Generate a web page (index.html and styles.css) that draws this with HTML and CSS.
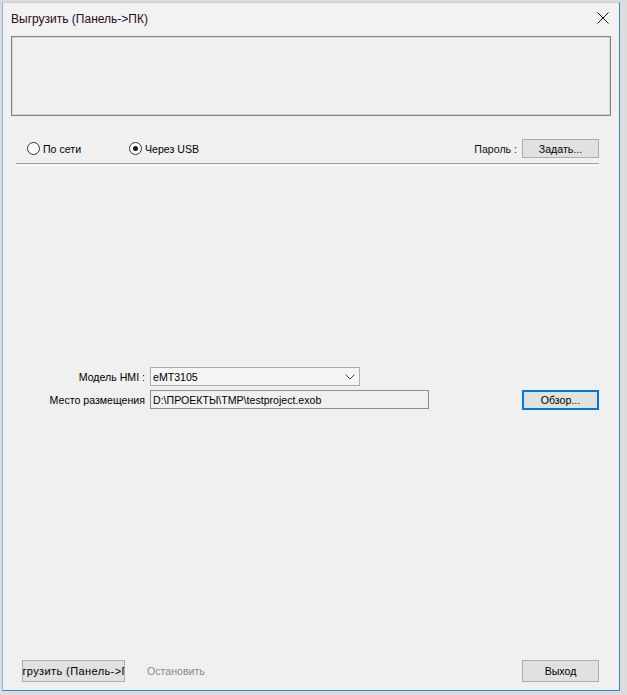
FILE: index.html
```html
<!DOCTYPE html>
<html lang="ru">
<head>
<meta charset="utf-8">
<title>Выгрузить (Панель->ПК)</title>
<link rel="stylesheet" href="styles.css">
</head>
<body>
<div class="window">
  <div class="titlebar">
    <span class="title">Выгрузить (Панель-&gt;ПК)</span>
    <span class="close">
      <svg width="12" height="12" viewBox="0 0 12 12"><path d="M0.5 0.5 L11.5 11.5 M11.5 0.5 L0.5 11.5" stroke="#111" stroke-width="1" fill="none"/></svg>
    </span>
  </div>
  <div class="logbox"></div>
  <div class="moderow">
    <label class="radio"><span class="circle"></span>По сети</label>
    <label class="radio"><span class="circle checked"></span>Через USB</label>
    <span class="pwdlabel">Пароль :</span>
    <span class="btn btn-set">Задать...</span>
  </div>
  <div class="separator"></div>
  <div class="form">
    <div class="formrow">
      <span class="flabel">Модель HMI :</span>
      <div class="select"><span>eMT3105</span>
        <svg class="chev" width="10" height="6" viewBox="0 0 10 6"><path d="M0.5 0.5 L5 5 L9.5 0.5" stroke="#444" stroke-width="1" fill="none"/></svg>
      </div>
    </div>
    <div class="formrow">
      <span class="flabel">Место размещения</span>
      <div class="input">D:\ПРОЕКТЫ\TMP\testproject.exob</div>
      <span class="btn btn-browse">Обзор...</span>
    </div>
  </div>
  <div class="bottomrow">
    <span class="btn btn-upload"><span>Выгрузить (Панель-&gt;ПК)</span></span>
    <span class="stop">Остановить</span>
    <span class="btn btn-exit">Выход</span>
  </div>
</div>
</body>
</html>
```

FILE: styles.css
```css
html, body {
  margin: 0;
  padding: 0;
}
body {
  width: 627px;
  height: 695px;
  background: #dcdcdc;
  font-family: "Liberation Sans", Arial, sans-serif;
  font-size: 10.6px;
  color: #000;
  overflow: hidden;
}
.window {
  margin: 2px 0 0 2px;
  width: 616px;
  height: 687px;
  background: #f0f0f0;
  border: 1px solid #2f86d6;
  border-top-color: #cfcfcf;
  border-left-color: #8fb5db;
  display: flex;
  flex-direction: column;
  box-sizing: content-box;
}
.titlebar {
  height: 33px;
  display: flex;
  align-items: flex-start;
  justify-content: space-between;
  background: #f2f2f2;
}
.title {
  font-size: 12px;
  color: #2a0a1e;
  margin: 9px 0 0 8px;
}
.close {
  margin: 9px 10px 0 0;
  width: 12px;
  height: 12px;
  display: flex;
}
.logbox {
  margin: 0 8px 0 8px;
  height: 78px;
  border: 1px solid #80848c;
  box-shadow: inset 0 0 0 1px #d8d8d8;
  background: #f0f0f0;
}
.moderow {
  margin: 23px 20px 0 24px;
  height: 19px;
  display: flex;
  align-items: center;
}
.radio {
  display: flex;
  align-items: center;
  gap: 3px;
}
.radio:first-child {
  width: 102px;
}
.circle {
  width: 11px;
  height: 11px;
  border: 1px solid #333;
  border-radius: 50%;
  background: #fff;
  box-sizing: content-box;
  position: relative;
}
.circle.checked::after {
  content: "";
  position: absolute;
  left: 3px;
  top: 3px;
  width: 5px;
  height: 5px;
  border-radius: 50%;
  background: #1a1a1a;
}
.pwdlabel {
  margin-left: auto;
  margin-right: 5px;
  color: #111;
}
.btn {
  box-sizing: border-box;
  height: 19px;
  border: 1px solid #adadad;
  background: #e1e1e1;
  display: flex;
  align-items: center;
  justify-content: center;
  white-space: nowrap;
  overflow: hidden;
}
.btn-set {
  width: 77px;
}
.separator {
  margin: 5px 20px 0 13px;
  height: 1px;
  border-top: 1px solid #a0a0a0;
  border-bottom: 1px solid #ffffff;
}
.form {
  margin-top: 201px;
  display: flex;
  flex-direction: column;
  gap: 4px;
}
.formrow {
  display: flex;
  align-items: center;
  height: 19px;
}
.flabel {
  width: 147px;
  text-align: right;
  padding-right: 5px;
  box-sizing: border-box;
}
.select {
  box-sizing: border-box;
  width: 210px;
  height: 19px;
  border: 1px solid #adadad;
  background: #f5f5f5;
  display: flex;
  align-items: center;
  justify-content: space-between;
  padding: 0 4px 0 2px;
}
.chev {
  display: block;
}
.input {
  box-sizing: border-box;
  width: 279px;
  height: 19px;
  border: 1px solid #8f8f8f;
  background: #f0f0f0;
  display: flex;
  align-items: center;
  padding-left: 2px;
}
.btn-browse {
  margin-left: auto;
  margin-right: 20px;
  width: 77px;
  height: 20px;
  border: 2px solid #0078d7;
}
.bottomrow {
  margin: auto 20px 8px 19px;
  height: 22px;
  display: flex;
  align-items: center;
}
.btn-upload {
  width: 103px;
  height: 22px;
  justify-content: center;
}
.btn-upload span {
  font-size: 11px;
  letter-spacing: 0.4px;
}
.stop {
  margin-left: 22px;
  color: #8a8a8a;
}
.btn-exit {
  margin-left: auto;
  width: 77px;
  height: 22px;
}
```
